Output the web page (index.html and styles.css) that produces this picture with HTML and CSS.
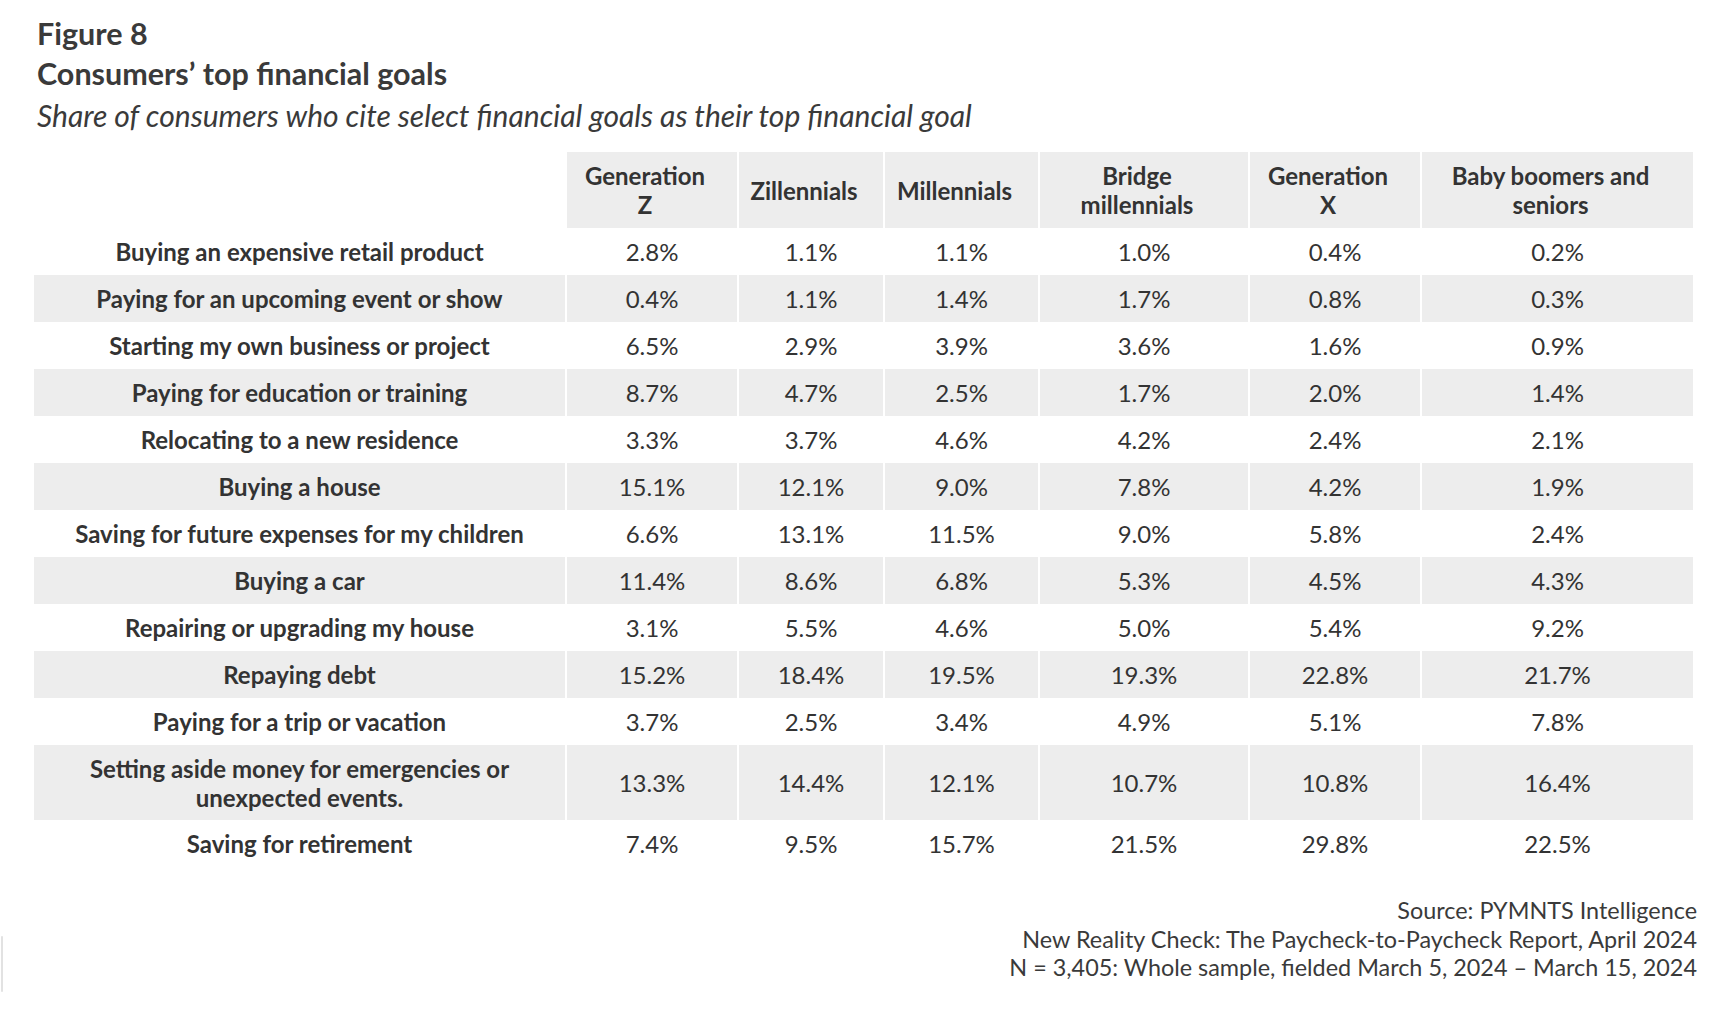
FILE: index.html
```html
<!DOCTYPE html>
<html lang="en">
<head>
<meta charset="utf-8">
<title>Figure 8 – Consumers’ top financial goals</title>
<link rel="stylesheet" href="styles.css">
</head>
<body>
<div class="page">
  <header class="heading">
    <div class="fig">Figure 8</div>
    <h1 class="title">Consumers’ top financial goals</h1>
    <p class="subtitle">Share of consumers who cite select financial goals as their top financial goal</p>
  </header>

  <table class="data">
    <colgroup>
      <col class="c-label">
      <col class="c-genz">
      <col class="c-zill">
      <col class="c-mill">
      <col class="c-bridge">
      <col class="c-genx">
      <col class="c-boom">
    </colgroup>
    <thead>
      <tr>
        <th class="blank"></th>
        <th>Generation<br>Z</th>
        <th>Zillennials</th>
        <th>Millennials</th>
        <th>Bridge<br>millennials</th>
        <th>Generation<br>X</th>
        <th>Baby boomers and<br>seniors</th>
      </tr>
    </thead>
    <tbody>
      <tr><th>Buying an expensive retail product</th><td>2.8%</td><td>1.1%</td><td>1.1%</td><td>1.0%</td><td>0.4%</td><td>0.2%</td></tr>
      <tr class="alt"><th>Paying for an upcoming event or show</th><td>0.4%</td><td>1.1%</td><td>1.4%</td><td>1.7%</td><td>0.8%</td><td>0.3%</td></tr>
      <tr><th>Starting my own business or project</th><td>6.5%</td><td>2.9%</td><td>3.9%</td><td>3.6%</td><td>1.6%</td><td>0.9%</td></tr>
      <tr class="alt"><th>Paying for education or training</th><td>8.7%</td><td>4.7%</td><td>2.5%</td><td>1.7%</td><td>2.0%</td><td>1.4%</td></tr>
      <tr><th>Relocating to a new residence</th><td>3.3%</td><td>3.7%</td><td>4.6%</td><td>4.2%</td><td>2.4%</td><td>2.1%</td></tr>
      <tr class="alt"><th>Buying a house</th><td>15.1%</td><td>12.1%</td><td>9.0%</td><td>7.8%</td><td>4.2%</td><td>1.9%</td></tr>
      <tr><th>Saving for future expenses for my children</th><td>6.6%</td><td>13.1%</td><td>11.5%</td><td>9.0%</td><td>5.8%</td><td>2.4%</td></tr>
      <tr class="alt"><th>Buying a car</th><td>11.4%</td><td>8.6%</td><td>6.8%</td><td>5.3%</td><td>4.5%</td><td>4.3%</td></tr>
      <tr><th>Repairing or upgrading my house</th><td>3.1%</td><td>5.5%</td><td>4.6%</td><td>5.0%</td><td>5.4%</td><td>9.2%</td></tr>
      <tr class="alt"><th>Repaying debt</th><td>15.2%</td><td>18.4%</td><td>19.5%</td><td>19.3%</td><td>22.8%</td><td>21.7%</td></tr>
      <tr><th>Paying for a trip or vacation</th><td>3.7%</td><td>2.5%</td><td>3.4%</td><td>4.9%</td><td>5.1%</td><td>7.8%</td></tr>
      <tr class="alt tall"><th>Setting aside money for emergencies or<br>unexpected events.</th><td>13.3%</td><td>14.4%</td><td>12.1%</td><td>10.7%</td><td>10.8%</td><td>16.4%</td></tr>
      <tr><th>Saving for retirement</th><td>7.4%</td><td>9.5%</td><td>15.7%</td><td>21.5%</td><td>29.8%</td><td>22.5%</td></tr>
    </tbody>
  </table>

  <footer class="foot">
    <span class="edge"></span>
    <div class="source">
      <div>Source: PYMNTS Intelligence</div>
      <div>New Reality Check: The Paycheck-to-Paycheck Report, April 2024</div>
      <div>N = 3,405: Whole sample, fielded March 5, 2024 – March 15, 2024</div>
    </div>
  </footer>
</div>
</body>
</html>
```

FILE: styles.css
```css
html, body {
  margin: 0;
  padding: 0;
  background: #ffffff;
}

body {
  font-family: Lato, "Open Sans", "Liberation Sans", sans-serif;
  color: #333333;
}

.page {
  width: 1710px;
  height: 1024px;
  padding-top: 13px;
  box-sizing: border-box;
  overflow: hidden;
}

.heading {
  margin-left: 37px;
}

.fig,
.title {
  font-size: 30.5px;
  font-weight: 700;
  line-height: 40px;
  margin: 0;
  color: #3a3a3a;
}

.subtitle {
  font-size: 30px;
  font-style: italic;
  line-height: 44px;
  margin: 0;
  color: #3a3a3a;
}

.data {
  margin-top: 15px;
  margin-left: 32px;
  border-collapse: separate;
  border-spacing: 2px 0;
  table-layout: fixed;
  width: 1663px;
  font-size: 24px;
}

.c-label { width: 531px; }
.c-genz { width: 170px; }
.c-zill { width: 144px; }
.c-mill { width: 153px; }
.c-bridge { width: 208px; }
.c-genx { width: 170px; }
.c-boom { width: 271px; }

.data th,
.data td {
  padding: 0;
  text-align: center;
  vertical-align: middle;
  line-height: 29px;
}

.data thead th {
  height: 76px;
  padding-right: 14px;
  background: #ededed;
  font-weight: 700;
}

.data thead th.blank {
  background: transparent;
  padding-right: 0;
}

.data tbody tr {
  height: 47px;
}

.data tbody tr.tall {
  height: 75px;
}

.data tbody th {
  font-weight: 700;
}

.data tbody td {
  font-weight: 400;
}

.data tbody tr.alt th,
.data tbody tr.alt td {
  background: #ededed;
}

.foot {
  margin-top: 29px;
  display: flex;
  justify-content: space-between;
  align-items: flex-start;
}

.edge {
  display: block;
  width: 2px;
  height: 56px;
  margin-left: 1px;
  margin-top: 40px;
  background: #e2e2e2;
  border-radius: 1px;
}

.source {
  margin-right: 13px;
  text-align: right;
  font-size: 23.4px;
  line-height: 28.5px;
  color: #3a3a3a;
}
```
